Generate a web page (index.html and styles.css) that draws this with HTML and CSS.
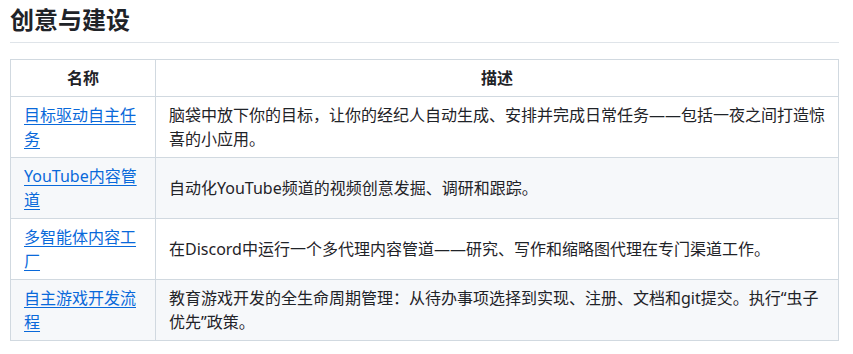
FILE: index.html
```html
<!DOCTYPE html>
<html lang="zh-CN">
<head>
<meta charset="utf-8">
<title>创意与建设</title>
<link rel="stylesheet" href="styles.css">
</head>
<body>
<div class="markdown">
  <h2 class="title">创意与建设</h2>
  <table class="list">
    <thead>
      <tr><th class="name-col">名称</th><th>描述</th></tr>
    </thead>
    <tbody>
      <tr>
        <td><a href="#">目标驱动自主任务</a></td>
        <td>脑袋中放下你的目标，让你的经纪人自动生成、安排并完成日常任务——包括一夜之间打造惊喜的小应用。</td>
      </tr>
      <tr>
        <td><a href="#">YouTube内容管道</a></td>
        <td>自动化YouTube频道的视频创意发掘、调研和跟踪。</td>
      </tr>
      <tr>
        <td><a href="#">多智能体内容工厂</a></td>
        <td>在Discord中运行一个多代理内容管道——研究、写作和缩略图代理在专门渠道工作。</td>
      </tr>
      <tr>
        <td><a href="#">自主游戏开发流程</a></td>
        <td>教育游戏开发的全生命周期管理：从待办事项选择到实现、注册、文档和git提交。执行“虫子优先”政策。</td>
      </tr>
    </tbody>
  </table>
</div>
</body>
</html>
```

FILE: styles.css
```css
html, body {
  margin: 0;
  padding: 0;
  background: #ffffff;
}

.markdown {
  width: 829px;
  padding: 0 10px;
  font-family: "Noto Sans", "Noto Sans CJK SC", sans-serif;
  font-size: 16px;
  line-height: 1.5;
  color: #1f2328;
}

.title {
  margin: 5px 0 16px 0;
  padding-bottom: 7px;
  font-size: 24px;
  line-height: 30px;
  font-weight: 700;
  border-bottom: 1px solid #dfe4e9;
}

.list {
  width: 100%;
  border-collapse: collapse;
  border-spacing: 0;
  table-layout: fixed;
}

.list th,
.list td {
  padding: 6px 13px;
  border: 1px solid #d1d9e0;
}

.list th {
  font-weight: 700;
  text-align: center;
}

.list .name-col {
  width: 118px;
}

.list tbody tr:nth-child(2n) {
  background: #f6f8fa;
}

.list a {
  color: #0969da;
  text-decoration: underline;
  text-underline-offset: 3px;
}
```
